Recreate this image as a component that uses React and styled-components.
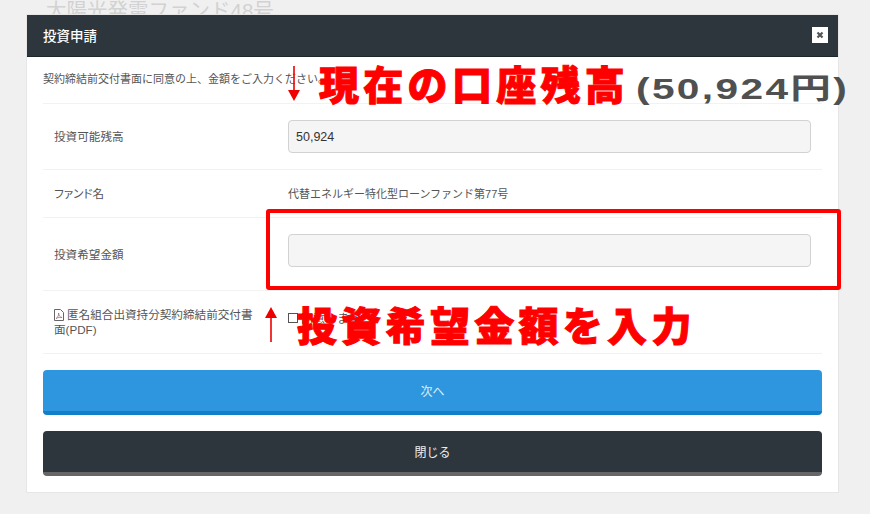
import * as React from 'react'
import styled, { createGlobalStyle } from 'styled-components'

const JP = `"Liberation Sans", "Noto Sans CJK JP", sans-serif`

const GlobalStyle = createGlobalStyle`
  html, body { margin: 0; padding: 0; height: 100%; background: #f0f0f0; overflow: hidden; }
  body { font-family: ${JP}; font-size: 12px; color: #555; }
`

export default function App () {
  return (
    <Page>
      <GlobalStyle/>
      <PageTitle>太陽光発電ファンド48号</PageTitle>
      <Modal>
        <ModalHeader>
          <ModalTitle>投資申請</ModalTitle>
          <CloseButton aria-label='閉じる'>
            <svg width='8' height='8' viewBox='0 0 8 8'>
              <path d='M1.500 1.500l5 5M6.500 1.500l-5 5' stroke='#555' strokeWidth='2.200'/>
            </svg>
          </CloseButton>
        </ModalHeader>
        <ModalBody>
          <Intro>契約締結前交付書面に同意の上、金額をご入力ください。</Intro>
          <Row $height={66}>
            <Label>投資可能残高</Label>
            <Value><Input readOnly value='50,924'/></Value>
          </Row>
          <Row $height={48}>
            <Label>ファンド名</Label>
            <Value $lift={2}>代替エネルギー特化型ローンファンド第77号</Value>
          </Row>
          <Row $height={73}>
            <Label>投資希望金額</Label>
            <Value $lift={8}><Input readOnly value=''/></Value>
          </Row>
          <Row $height={64} $last>
            <Label>
              <PdfIcon width='10' height='12' viewBox='0 0 10 12'>
                <path d='M.5.5h6l3 3v8h-9z' fill='none' stroke='#666'/>
                <path d='M2 9.500c2-1 3-4 2.600-5.500C4.500 6 6 8.500 8 8.500 6.500 8 4 8.500 2 9.500z' fill='none' stroke='#866' strokeWidth='.7'/>
              </PdfIcon>
              匿名組合出資持分契約締結前交付書面(PDF)
            </Label>
            <Value $lift={9}>
              <CheckText><CheckBox/>同意します</CheckText>
            </Value>
          </Row>
          <Button $bg='#2e96de' $edge='#0f7fcb' $color='#dbeefa'>次へ</Button>
          <Button $bg='#2c363c' $edge='#666' $color='#eee'>閉じる</Button>
        </ModalBody>
      </Modal>
      <Tabs>
        <Tab $color='#ecd3d8'/>
        <Tab $color='#cfcfcf'/>
        <Tab $color='#cfcfcf'/>
        <Tab $color='#cfcfcf'/>
      </Tabs>

      <Arrow $left={287} $top={65} width='14' height='38' viewBox='0 0 14 38'>
        <path d='M7 1v26' stroke='#e00' strokeWidth='1.600'/>
        <path d='M1 25h12L7 36z' fill='#e00'/>
      </Arrow>
      <Shout $left={319} $top={56}>現在の口座残高</Shout>
      <Balance>(50,924円)</Balance>
      <Highlight/>
      <Arrow $left={264} $top={306} width='14' height='38' viewBox='0 0 14 38'>
        <path d='M7 10v26' stroke='#e00' strokeWidth='1.600'/>
        <path d='M1 12h12L7 1z' fill='#e00'/>
      </Arrow>
      <Shout $left={297} $top={297}>投資希望金額を入力</Shout>
    </Page>
  )
}

const Page = styled.div`
  position: relative;
  width: 870px;
  height: 514px;
  overflow: hidden;
`

const PageTitle = styled.h1`
  margin: 0 0 -7px 46px;
  height: 21px;
  font-size: 20.500px;
  font-weight: 400;
  line-height: 21px;
  color: #d2d2d2;
`

const Modal = styled.div`
  position: relative;
  box-sizing: border-box;
  width: 813px;
  height: 479px;
  margin-left: 26px;
  background: #fff;
  border: 1px solid #e6e6e6;
  display: flex;
  flex-direction: column;
`

const ModalHeader = styled.div`
  box-sizing: border-box;
  height: 42px;
  flex: none;
  padding: 0 10px 2px 16px;
  background: #2c363c;
  border-bottom: 1px solid #1c262b;
  display: flex;
  align-items: center;
  justify-content: space-between;
`

const ModalTitle = styled.div`
  color: #fff;
  font-size: 13.500px;
  font-weight: 500;
`

const CloseButton = styled.div`
  width: 16px;
  height: 16px;
  background: #fff;
  display: flex;
  align-items: center;
  justify-content: center;
`

const ModalBody = styled.div`
  padding: 0 16px;
  display: flex;
  flex-direction: column;
`

const Intro = styled.div`
  height: 46px;
  line-height: 45px;
  font-size: 11px;
  color: #555;
`

const Row = styled.div`
  box-sizing: border-box;
  height: ${p => p.$height}px;
  border-top: 1px solid #f2f2f2;
  ${p => p.$last && 'border-bottom: 1px solid #f2f2f2; margin-bottom: 16px;'}
  display: flex;
  align-items: center;
`

const Label = styled.div`
  box-sizing: border-box;
  width: 245px;
  flex: none;
  padding: 0 26px 0 11px;
  font-size: 11.600px;
  line-height: 15px;
  font-feature-settings: "palt";
  color: #555;
`

const Value = styled.div`
  flex: 1;
  padding-right: 11px;
  margin-top: ${p => -(p.$lift || 0)}px;
  font-size: 11px;
  color: #555;
`

const Input = styled.input`
  box-sizing: border-box;
  display: block;
  width: 100%;
  height: 33px;
  padding: 0 7px;
  background: #f5f5f5;
  border: 1px solid #d2d2d2;
  border-radius: 4px;
  outline: none;
  font-family: ${JP};
  font-size: 12.500px;
  color: #333;
`

const PdfIcon = styled.svg`
  margin-right: 3px;
  vertical-align: -2px;
`

const CheckText = styled.span`
  display: flex;
  align-items: center;
  font-size: 12px;
`

const CheckBox = styled.span`
  box-sizing: border-box;
  width: 10px;
  height: 10px;
  margin-right: 3px;
  background: #fff;
  border: 1px solid #555;
`

const Button = styled.div`
  box-sizing: border-box;
  height: 45px;
  margin-bottom: 16px;
  padding-bottom: 1px;
  background: ${p => p.$bg};
  border-bottom: 4px solid ${p => p.$edge};
  border-radius: 4px;
  color: ${p => p.$color};
  font-size: 12px;
  display: flex;
  align-items: center;
  justify-content: center;
`

const Tabs = styled.div`
  display: flex;
  gap: 1px;
  margin: 21px 0 0 46px;
`

const Tab = styled.div`
  width: 125px;
  height: 1px;
  background: ${p => p.$color};
`

const Arrow = styled.svg`
  position: absolute;
  left: ${p => p.$left}px;
  top: ${p => p.$top}px;
`

const Shout = styled.div`
  position: absolute;
  left: ${p => p.$left}px;
  top: ${p => p.$top}px;
  font-family: "Noto Sans CJK JP", sans-serif;
  font-size: 40px;
  line-height: 54px;
  font-weight: 900;
  letter-spacing: 4.300px;
  color: #f00;
  -webkit-text-stroke: 1px #f00;
  white-space: nowrap;
`

const Balance = styled.div`
  position: absolute;
  left: 636px;
  top: 70px;
  font-family: "Liberation Sans", "Noto Sans CJK JP", sans-serif;
  font-size: 29px;
  line-height: 38px;
  font-weight: 700;
  letter-spacing: 1.700px;
  color: #505050;
  transform: scaleX(1.400);
  transform-origin: left center;
  white-space: nowrap;
`

const Highlight = styled.div`
  position: absolute;
  left: 266px;
  top: 209px;
  box-sizing: border-box;
  width: 575px;
  height: 81px;
  border: 4px solid #f00;
  border-radius: 3px;
`
